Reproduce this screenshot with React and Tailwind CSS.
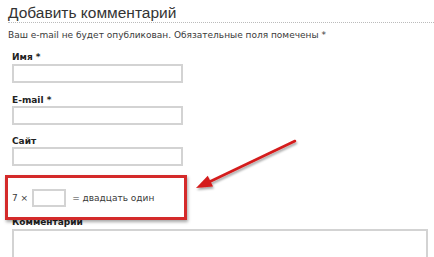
export default function App() {
  return (
    <div className="relative w-[434px] h-[257px] overflow-hidden bg-white text-[#333] font-['DejaVu_Sans',sans-serif]">
      <div className="ml-[8px] pt-[3px] border-b border-dotted border-[#bbb]">
        <h2 className="font-['Liberation_Sans',Arial,sans-serif] text-[15.5px] leading-[19px] text-[#333]">Добавить комментарий</h2>
      </div>

      <div className="pl-[8px] mt-[6px] text-[9px] leading-[12px] text-[#3a3a3a]">
        Ваш e-mail не будет опубликован. Обязательные поля помечены *
      </div>

      <form className="pl-[12px] flex flex-col">
        <label className="mt-[10px] text-[9px] leading-[12px] font-bold text-[#222]">Имя *</label>
        <input className="mt-[1px] w-[171px] h-[19px] border-2 border-[#d3d3d3] outline-none" />

        <label className="mt-[11px] text-[9px] leading-[12px] font-bold text-[#222]">E-mail *</label>
        <input className="w-[171px] h-[19px] border-2 border-[#d3d3d3] outline-none" />

        <label className="mt-[10px] text-[9px] leading-[12px] font-bold text-[#222]">Сайт</label>
        <input className="w-[171px] h-[19px] border-2 border-[#d3d3d3] outline-none" />

        <div className="mt-[23px] flex items-center gap-[4px] text-[9px] leading-[12px] text-[#3a3a3a]">
          <span>7 ×</span>
          <input className="w-[34px] h-[18px] border-2 border-[#d3d3d3] outline-none" />
          <span className="ml-[2px]">= двадцать один</span>
        </div>

        <label className="mt-[9px] text-[9px] leading-[12px] font-bold text-[#222]">Комментарий</label>
        <textarea className="mt-[1px] w-[416px] h-[60px] border-2 border-[#d3d3d3] resize-none outline-none" />
      </form>

      <div className="absolute left-[5px] top-[175px] w-[182px] h-[45px] border-[3px] border-[#d42a2a] shadow-[1px_2px_3px_rgba(0,0,0,0.35)] pointer-events-none" />

      <svg className="absolute inset-0 pointer-events-none" width="434" height="257" viewBox="0 0 434 257">
        <defs>
          <filter id="sh" x="-20%" y="-20%" width="140%" height="140%">
            <feDropShadow dx="1" dy="2" stdDeviation="1.2" floodColor="#000" floodOpacity="0.35" />
          </filter>
        </defs>
        <g filter="url(#sh)">
          <line x1="295" y1="141" x2="208" y2="182.5" stroke="#d41c1c" strokeWidth="2.5" strokeLinecap="round" />
          <polygon points="196,188 213,186.5 207.8,175.7" fill="#d41c1c" />
        </g>
      </svg>
    </div>
  );
}
